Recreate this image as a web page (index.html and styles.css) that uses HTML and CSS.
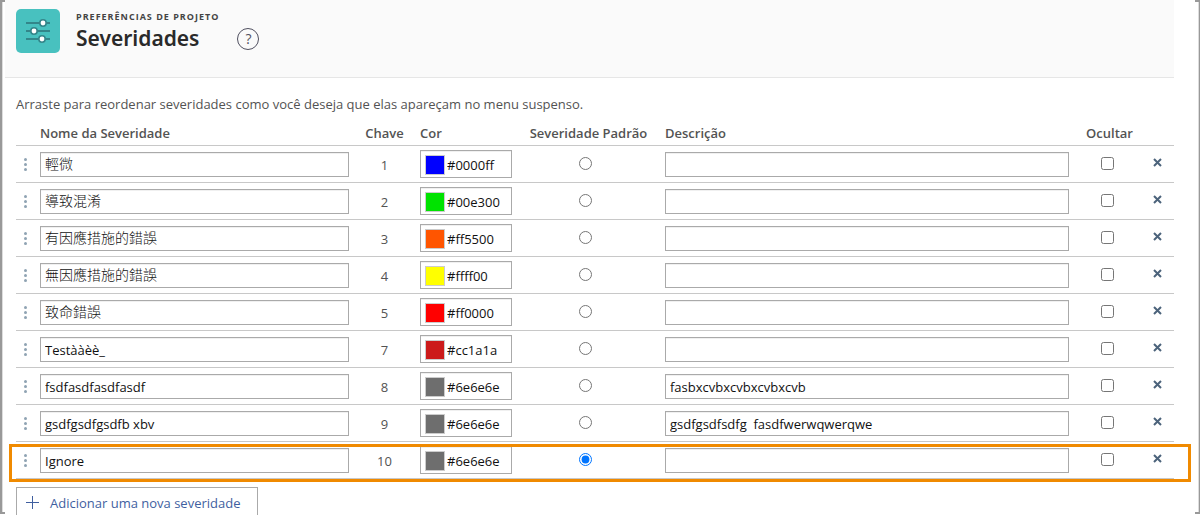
FILE: index.html
```html
<!DOCTYPE html>
<html lang="pt">
<head>
<meta charset="utf-8">
<title>Severidades</title>
<link rel="stylesheet" href="styles.css">
</head>
<body>
<svg class="defs" aria-hidden="true">
  <symbol id="grip" viewBox="0 0 3 13"><circle cx="1.5" cy="1.5" r="1.5"/><circle cx="1.5" cy="6.5" r="1.5"/><circle cx="1.5" cy="11.5" r="1.5"/></symbol>
  <symbol id="remove" viewBox="0 0 9 9"><path d="M1 1l7 7M8 1l-7 7"/></symbol>
</svg>
<div class="frame">
  <div class="bracket bracket-left"></div>
  <div class="page">
    <header class="header">
      <svg class="app-icon" viewBox="0 0 44 44" aria-hidden="true">
        <rect width="44" height="44" rx="5" fill="#48c1bf"/>
        <path d="M10 14h24M10 22h24M10 30h24" stroke="#33868a" stroke-width="2"/>
        <g fill="#fff" stroke="#33868a" stroke-width="1.6"><circle cx="27" cy="14" r="3.2"/><circle cx="18" cy="22" r="3.2"/><circle cx="26" cy="30" r="3.2"/></g>
      </svg>
      <div class="titles">
        <p class="eyebrow">PREFERÊNCIAS DE PROJETO</p>
        <div class="title-row">
          <h1>Severidades</h1>
          <button class="help" type="button" aria-label="Ajuda">?</button>
        </div>
      </div>
    </header>
    <main class="content">
      <p class="intro">Arraste para reordenar severidades como você deseja que elas apareçam no menu suspenso.</p>
      <table class="severities">
        <colgroup><col class="c-grip"><col class="c-name"><col class="c-key"><col class="c-color"><col class="c-default"><col class="c-desc"><col class="c-hide"><col class="c-remove"></colgroup>
        <thead>
          <tr><th></th><th>Nome da Severidade</th><th class="mid">Chave</th><th>Cor</th><th class="mid">Severidade Padrão</th><th>Descrição</th><th class="mid">Ocultar</th><th></th></tr>
        </thead>
        <tbody>
          <tr>
            <td><svg class="grip"><use href="#grip"/></svg></td>
            <td><input class="text cjk" aria-label="Nome da Severidade" value="輕微"></td>
            <td class="key">1</td>
            <td><div class="color"><span class="swatch blue"></span><input class="hex" aria-label="Cor" value="#0000ff"></div></td>
            <td class="pick pick-default"><input type="radio" name="default" aria-label="Severidade Padrão"></td>
            <td><input class="text" aria-label="Descrição" value=""></td>
            <td class="pick"><input type="checkbox" aria-label="Ocultar"></td>
            <td><button class="remove" type="button" aria-label="Remover"><svg><use href="#remove"/></svg></button></td>
          </tr>
          <tr>
            <td><svg class="grip"><use href="#grip"/></svg></td>
            <td><input class="text cjk" aria-label="Nome da Severidade" value="導致混淆"></td>
            <td class="key">2</td>
            <td><div class="color"><span class="swatch green"></span><input class="hex" aria-label="Cor" value="#00e300"></div></td>
            <td class="pick pick-default"><input type="radio" name="default" aria-label="Severidade Padrão"></td>
            <td><input class="text" aria-label="Descrição" value=""></td>
            <td class="pick"><input type="checkbox" aria-label="Ocultar"></td>
            <td><button class="remove" type="button" aria-label="Remover"><svg><use href="#remove"/></svg></button></td>
          </tr>
          <tr>
            <td><svg class="grip"><use href="#grip"/></svg></td>
            <td><input class="text cjk" aria-label="Nome da Severidade" value="有因應措施的錯誤"></td>
            <td class="key">3</td>
            <td><div class="color"><span class="swatch orange"></span><input class="hex" aria-label="Cor" value="#ff5500"></div></td>
            <td class="pick pick-default"><input type="radio" name="default" aria-label="Severidade Padrão"></td>
            <td><input class="text" aria-label="Descrição" value=""></td>
            <td class="pick"><input type="checkbox" aria-label="Ocultar"></td>
            <td><button class="remove" type="button" aria-label="Remover"><svg><use href="#remove"/></svg></button></td>
          </tr>
          <tr>
            <td><svg class="grip"><use href="#grip"/></svg></td>
            <td><input class="text cjk" aria-label="Nome da Severidade" value="無因應措施的錯誤"></td>
            <td class="key">4</td>
            <td><div class="color"><span class="swatch yellow"></span><input class="hex" aria-label="Cor" value="#ffff00"></div></td>
            <td class="pick pick-default"><input type="radio" name="default" aria-label="Severidade Padrão"></td>
            <td><input class="text" aria-label="Descrição" value=""></td>
            <td class="pick"><input type="checkbox" aria-label="Ocultar"></td>
            <td><button class="remove" type="button" aria-label="Remover"><svg><use href="#remove"/></svg></button></td>
          </tr>
          <tr>
            <td><svg class="grip"><use href="#grip"/></svg></td>
            <td><input class="text cjk" aria-label="Nome da Severidade" value="致命錯誤"></td>
            <td class="key">5</td>
            <td><div class="color"><span class="swatch red"></span><input class="hex" aria-label="Cor" value="#ff0000"></div></td>
            <td class="pick pick-default"><input type="radio" name="default" aria-label="Severidade Padrão"></td>
            <td><input class="text" aria-label="Descrição" value=""></td>
            <td class="pick"><input type="checkbox" aria-label="Ocultar"></td>
            <td><button class="remove" type="button" aria-label="Remover"><svg><use href="#remove"/></svg></button></td>
          </tr>
          <tr>
            <td><svg class="grip"><use href="#grip"/></svg></td>
            <td><input class="text" aria-label="Nome da Severidade" value="Testààèè_"></td>
            <td class="key">7</td>
            <td><div class="color"><span class="swatch crimson"></span><input class="hex" aria-label="Cor" value="#cc1a1a"></div></td>
            <td class="pick pick-default"><input type="radio" name="default" aria-label="Severidade Padrão"></td>
            <td><input class="text" aria-label="Descrição" value=""></td>
            <td class="pick"><input type="checkbox" aria-label="Ocultar"></td>
            <td><button class="remove" type="button" aria-label="Remover"><svg><use href="#remove"/></svg></button></td>
          </tr>
          <tr>
            <td><svg class="grip"><use href="#grip"/></svg></td>
            <td><input class="text" aria-label="Nome da Severidade" value="fsdfasdfasdfasdf"></td>
            <td class="key">8</td>
            <td><div class="color"><span class="swatch gray"></span><input class="hex" aria-label="Cor" value="#6e6e6e"></div></td>
            <td class="pick pick-default"><input type="radio" name="default" aria-label="Severidade Padrão"></td>
            <td><input class="text" aria-label="Descrição" value="fasbxcvbxcvbxcvbxcvb"></td>
            <td class="pick"><input type="checkbox" aria-label="Ocultar"></td>
            <td><button class="remove" type="button" aria-label="Remover"><svg><use href="#remove"/></svg></button></td>
          </tr>
          <tr>
            <td><svg class="grip"><use href="#grip"/></svg></td>
            <td><input class="text" aria-label="Nome da Severidade" value="gsdfgsdfgsdfb xbv"></td>
            <td class="key">9</td>
            <td><div class="color"><span class="swatch gray"></span><input class="hex" aria-label="Cor" value="#6e6e6e"></div></td>
            <td class="pick pick-default"><input type="radio" name="default" aria-label="Severidade Padrão"></td>
            <td><input class="text" aria-label="Descrição" value="gsdfgsdfsdfg  fasdfwerwqwerqwe"></td>
            <td class="pick"><input type="checkbox" aria-label="Ocultar"></td>
            <td><button class="remove" type="button" aria-label="Remover"><svg><use href="#remove"/></svg></button></td>
          </tr>
          <tr class="highlight">
            <td><svg class="grip"><use href="#grip"/></svg></td>
            <td><input class="text" aria-label="Nome da Severidade" value="Ignore"></td>
            <td class="key">10</td>
            <td><div class="color"><span class="swatch gray"></span><input class="hex" aria-label="Cor" value="#6e6e6e"></div></td>
            <td class="pick pick-default"><input type="radio" name="default" aria-label="Severidade Padrão" checked></td>
            <td><input class="text" aria-label="Descrição" value=""></td>
            <td class="pick"><input type="checkbox" aria-label="Ocultar"></td>
            <td><button class="remove" type="button" aria-label="Remover"><svg><use href="#remove"/></svg></button></td>
          </tr>
        </tbody>
      </table>
      <button class="add" type="button"><svg viewBox="0 0 13 13" aria-hidden="true"><path d="M6.5 0v13M0 6.5h13"/></svg>Adicionar uma nova severidade</button>
    </main>
  </div>
  <div class="bracket bracket-right"></div>
</div>
</body>
</html>
```
FILE: styles.css
```css
* { box-sizing: border-box; }
body {
  margin: 0;
  background: #fff;
  color: #535353;
  font: 13px/18px "Open Sans", "Noto Sans CJK TC", sans-serif;
}
p, h1 { margin: 0; }
input, button { font: inherit; margin: 0; }
.defs { position: absolute; width: 0; height: 0; }

.frame { display: flex; height: 100vh; overflow: hidden; }
.bracket { flex: none; width: 5px; height: calc(100vh - 1px); border: 2px solid #999; }
.bracket-left { border-right: 0; box-shadow: inset 1px 0 #ddd; }
.bracket-right { border-left: 0; border-right-width: 1px; box-shadow: inset -1px 0 #ddd; margin-left: 21px; }
.page { flex: 1; min-width: 0; }

.header {
  display: flex;
  gap: 16px;
  padding: 9px 11px 24px;
  background: #fafafa;
  border-bottom: 1px solid #e6e6e6;
}
.app-icon { width: 44px; height: 44px; }
.eyebrow { font-size: 9px; line-height: 15px; font-weight: 700; letter-spacing: 1px; color: #444; }
.title-row { display: flex; align-items: center; gap: 38px; }
h1 { font-family: "Noto Sans", sans-serif; font-size: 21px; line-height: 29px; font-weight: 600; color: #2a2a2a; }
.help {
  width: 22px;
  height: 22px;
  padding: 0;
  border: 1px solid #505060;
  border-radius: 50%;
  background: none;
  color: #505060;
  font-size: 14px;
  line-height: 20px;
}

.content { padding: 17px 0 0 11px; }
.intro { line-height: 18px; }

.severities { width: 100%; table-layout: fixed; border-collapse: separate; border-spacing: 0; margin-top: 10px; }
.c-grip { width: 24px; }
.c-name { width: 309px; }
.c-key { width: 71px; }
.c-color { width: 92px; }
.c-default { width: 153px; }
.c-hide { width: 81px; }
.c-remove { width: 24px; }
th, td { padding: 0; border-bottom: 1px solid #c8c8c8; }
th { height: 23px; padding-bottom: 2px; text-align: left; font-weight: 600; line-height: 18px; white-space: nowrap; }
th.mid { text-align: center; }
td { height: 37px; vertical-align: middle; }
.key { text-align: center; padding-top: 1px; }
.pick { text-align: center; padding: 0 4px 1px 0; }
.pick-default { padding-right: 6px; }
.pick input { display: block; width: 13px; height: 13px; margin: 0 auto; }

.grip { display: block; width: 3px; height: 13px; margin-left: 8px; fill: #8fa3b3; }
.text {
  display: block;
  width: 100%;
  height: 25px;
  padding: 1px 4px 0;
  border: 1px solid #aaa;
  background: #fff;
  box-shadow: inset 0 1px #f0f0f0;
  color: #111;
}
.cjk { padding: 0 4px 2px; font-family: "Noto Sans CJK TC", sans-serif; font-size: 14px; font-weight: 300; }
.color {
  display: flex;
  align-items: center;
  gap: 2px;
  height: 28px;
  padding: 2px 4px 0;
  border: 1px solid #aaa;
  box-shadow: inset 0 1px #f0f0f0;
}
.swatch { flex: none; width: 20px; height: 20px; border: 1px solid #ccc; }
.blue { background: #0000ff; }
.green { background: #00e300; }
.orange { background: #ff5500; }
.yellow { background: #ffff00; }
.red { background: #ff0000; }
.crimson { background: #cc1a1a; }
.gray { background: #6e6e6e; }
.hex { width: 100%; min-width: 0; padding: 0; border: 0; background: none; color: #111; }
.remove { display: block; padding: 0 0 4px 3px; border: 0; background: none; }
.remove svg { display: block; width: 9px; height: 9px; fill: none; stroke: #4c637b; stroke-width: 2; }

.highlight { position: relative; }
.highlight td:first-child::after {
  content: "";
  position: absolute;
  inset: 2px -17px -3px -7px;
  border: 3px solid #f08a00;
  pointer-events: none;
}
.add {
  display: flex;
  align-items: center;
  gap: 11px;
  height: 33px;
  margin-top: 8px;
  padding: 0 17px 2px 9px;
  border: 1px solid #aaa;
  background: #fff;
  color: #3f5f9f;
}
.add svg { width: 13px; height: 13px; stroke: #3f5f9f; }
```
